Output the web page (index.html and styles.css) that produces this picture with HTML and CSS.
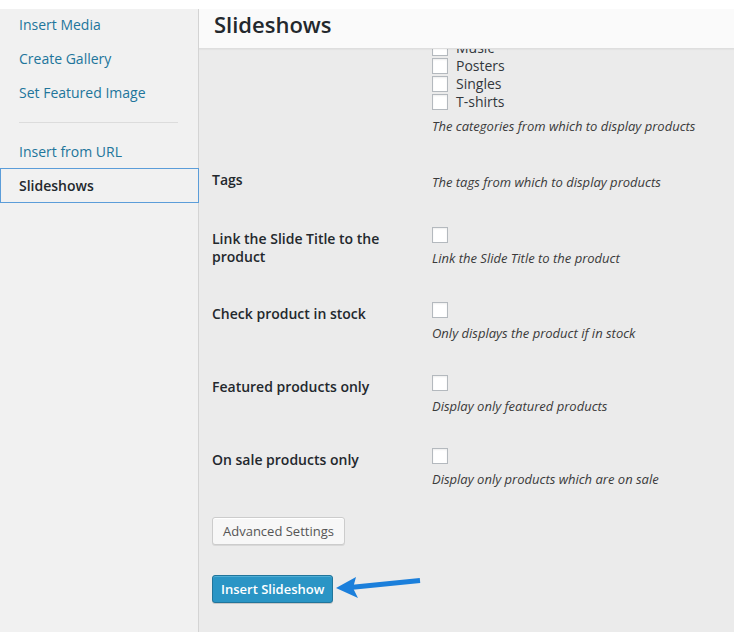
FILE: index.html
```html
<!DOCTYPE html>
<html>
<head>
<meta charset="utf-8">
<link rel="stylesheet" href="styles.css">
</head>
<body>
<div class="topband"></div>
<div class="frame">
  <nav class="menu">
    <a class="item" href="#">Insert Media</a>
    <a class="item" href="#">Create Gallery</a>
    <a class="item" href="#">Set Featured Image</a>
    <div class="separator"></div>
    <a class="item" href="#">Insert from URL</a>
    <a class="item active" href="#">Slideshows</a>
  </nav>
  <div class="main">
    <header class="title"><h1>Slideshows</h1></header>
    <div class="content">
      <div class="scroll">
        <div class="row">
          <div class="label"></div>
          <div class="field">
            <ul class="cats">
              <li><input type="checkbox"><span>Music</span></li>
              <li><input type="checkbox"><span>Posters</span></li>
              <li><input type="checkbox"><span>Singles</span></li>
              <li><input type="checkbox"><span>T-shirts</span></li>
            </ul>
            <p class="desc cat-desc">The categories from which to display products</p>
          </div>
        </div>
        <div class="row">
          <div class="label">Tags</div>
          <div class="field tags">
            <p class="desc">The tags from which to display products</p>
          </div>
        </div>
        <div class="row">
          <div class="label">Link the Slide Title to the product</div>
          <div class="field">
            <input type="checkbox">
            <p class="desc">Link the Slide Title to the product</p>
          </div>
        </div>
        <div class="row">
          <div class="label">Check product in stock</div>
          <div class="field">
            <input type="checkbox">
            <p class="desc">Only displays the product if in stock</p>
          </div>
        </div>
        <div class="row">
          <div class="label">Featured products only</div>
          <div class="field">
            <input type="checkbox">
            <p class="desc">Display only featured products</p>
          </div>
        </div>
        <div class="row">
          <div class="label">On sale products only</div>
          <div class="field">
            <input type="checkbox">
            <p class="desc">Display only products which are on sale</p>
          </div>
        </div>
        <div class="actions">
          <button class="btn">Advanced Settings</button>
          <button class="btn primary">Insert Slideshow</button>
        </div>
      </div>
    </div>
  </div>
</div>
<svg class="arrow" width="100" height="34" viewBox="330 570 100 34">
  <line x1="420" y1="580.5" x2="350" y2="587.5" stroke="#1b7fdb" stroke-width="5"/>
  <polygon points="336,588 356,577 353,588 358,598" fill="#1b7fdb"/>
</svg>
</body>
</html>
```

FILE: styles.css
```css
* { box-sizing: border-box; }
html, body { margin: 0; padding: 0; }
body {
  background: #fff;
  font-family: "Open Sans", "Noto Sans", sans-serif;
  width: 734px;
  height: 632px;
  overflow: hidden;
  position: relative;
}
.topband { height: 9px; background: #fff; }
.frame {
  display: flex;
  height: 623px;
}
.menu {
  width: 199px;
  flex: none;
  background: #f1f1f1;
  border-right: 1px solid #d4d4d4;
  display: flex;
  flex-direction: column;
}
.item {
  display: block;
  padding: 8px 20px 8px 19px;
  line-height: 18px;
  font-size: 14px;
  color: #21759b;
  text-decoration: none;
}
.item:first-child { padding-top: 7px; }
.separator {
  margin: 12px 20px 12px 19px;
  border-top: 1px solid #dcdcdc;
  height: 0;
}
.item.active {
  color: #23282d;
  font-weight: 600;
  border: 1px solid #5b9dd9;
  padding: 8px 19px 7px 18px;
  margin-top: -1px;
  margin-right: -1px;
  background: #f1f1f1;
  position: relative;
}
.main {
  flex: 1;
  display: flex;
  flex-direction: column;
  background: #ebebeb;
  min-width: 0;
}
.title {
  height: 40px;
  background: #fafafa;
  border-bottom: 1px solid #dedede;
  box-shadow: 0 1px 1px rgba(0,0,0,0.03);
  position: relative;
  z-index: 2;
}
.title h1 {
  margin: 0;
  padding-left: 15px;
  font-size: 22px;
  line-height: 30px;
  font-weight: 600;
  color: #23282d;
}
.content {
  flex: 1;
  overflow: hidden;
  padding-left: 13px;
}
.scroll { margin-top: -11px; }
.row {
  display: flex;
  margin-bottom: 33px;
}
.label {
  width: 220px;
  flex: none;
  padding: 3px 10px 3px 0;
  font-size: 14px;
  line-height: 18px;
  font-weight: 600;
  color: #23282d;
}
.field { flex: 1; }
.field.tags { padding-top: 5px; padding-bottom: 3px; }
.field.tags .desc { margin: 0; }
.cats { list-style: none; margin: 1px 0 0; padding: 0; }
.cats li {
  display: flex;
  align-items: flex-start;
  height: 18px;
  font-size: 14px;
  line-height: 18px;
  color: #32373c;
}
.cats li input { margin-top: 1px; margin-right: 8px; }
input[type="checkbox"] {
  -webkit-appearance: none;
  appearance: none;
  display: block;
  width: 16px;
  height: 16px;
  margin: 0;
  background: #fff;
  border: 1px solid #b4b9be;
  box-shadow: inset 0 1px 2px rgba(0,0,0,0.07);
}
.desc {
  margin: 6px 0 0;
  font-size: 13px;
  line-height: 18px;
  font-style: italic;
  color: #3a3a3a;
}
.cat-desc { margin-top: 6px; }
.actions {
  display: flex;
  flex-direction: column;
  align-items: flex-start;
  gap: 30px;
  margin-top: -4px;
}
.btn {
  font-family: "Open Sans", "Noto Sans", sans-serif;
  font-size: 13px;
  height: 28px;
  line-height: 26px;
  padding: 0 10px;
  border-radius: 3px;
  border: 1px solid #cccccc;
  background: #f7f7f7;
  color: #555;
  box-shadow: inset 0 1px 0 #fff, 0 1px 0 rgba(0,0,0,0.08);
  cursor: pointer;
}
.btn.primary {
  background: #2a95c5;
  border-color: #21759b;
  color: #fff;
  font-weight: 600;
  padding: 0 8px;
  box-shadow: inset 0 1px 0 rgba(120,200,230,0.5), 0 1px 0 rgba(0,0,0,0.15);
}
.arrow {
  position: absolute;
  left: 330px;
  top: 570px;
}
```
